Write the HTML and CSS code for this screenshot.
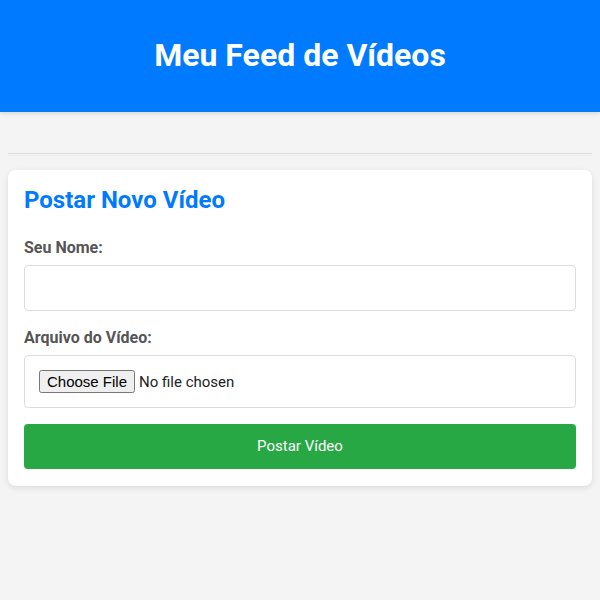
FILE: index.html
```html
<!DOCTYPE html>
<html lang="pt">
<head>
<meta charset="utf-8">
<title>Meu Feed de Vídeos</title>
<link rel="stylesheet" href="styles.css">
</head>
<body>
<header class="site-header">
  <h1 class="site-title">Meu Feed de Vídeos</h1>
</header>
<main class="page">
  <hr class="divider">
  <section class="card">
    <h2 class="card-title">Postar Novo Vídeo</h2>
    <form class="post-form">
      <label class="field-label" for="nome">Seu Nome:</label>
      <input class="text-input" id="nome" type="text">
      <label class="field-label second" for="arquivo">Arquivo do Vídeo:</label>
      <input class="file-input" id="arquivo" type="file">
      <button class="submit-btn" type="button">Postar Vídeo</button>
    </form>
  </section>
</main>
</body>
</html>
```
FILE: styles.css
```css
html, body {
  margin: 0;
  padding: 0;
}
body {
  background: #f4f4f4;
  font-family: Roboto, "Liberation Sans", Arial, sans-serif;
  color: #333;
}
.site-header {
  background: #007bff;
  padding: 16px;
  text-align: center;
  box-shadow: 0 2px 4px rgba(0,0,0,0.1);
}
.site-title {
  margin: 21px 0 21.4px;
  font-size: 32px;
  line-height: 37.5px;
  font-weight: 700;
  color: #fff;
}
.page {
  padding: 20px 8px;
}
.divider {
  margin: 21px 0 14px;
  height: 1px;
  border: 0;
  border-top: 1px solid #dcdcdc;
  border-bottom: 1px solid #ececec;
}
.card {
  background: #fff;
  border-radius: 8px;
  padding: 16px 16px 17px;
  box-shadow: 0 2px 6px rgba(0,0,0,0.1);
}
.card-title {
  margin: 0 0 24px;
  font-size: 24px;
  line-height: 28px;
  font-weight: 700;
  color: #007bff;
}
.post-form {
  display: flex;
  flex-direction: column;
}
.field-label {
  display: block;
  font-size: 16px;
  line-height: 19px;
  font-weight: 700;
  color: #555;
  margin-bottom: 8px;
}
.field-label.second {
  margin-top: 17px;
}
.text-input {
  box-sizing: border-box;
  width: 100%;
  height: 46px;
  padding: 12px;
  border: 1px solid #ddd;
  border-radius: 4px;
  font: 16px Roboto, "Liberation Sans", Arial, sans-serif;
  background: #fff;
}
.file-input {
  box-sizing: border-box;
  width: 100%;
  height: 53px;
  padding: 14px;
  border: 1px solid #ddd;
  border-radius: 4px;
  font: 15px Roboto, "Liberation Sans", Arial, sans-serif;
  color: #222;
  background: #fff;
}
.submit-btn {
  margin-top: 16px;
  height: 45px;
  width: 100%;
  border: 0;
  border-radius: 4px;
  background: #28a745;
  color: #fff;
  font: 15px Roboto, "Liberation Sans", Arial, sans-serif;
  cursor: pointer;
}
```
